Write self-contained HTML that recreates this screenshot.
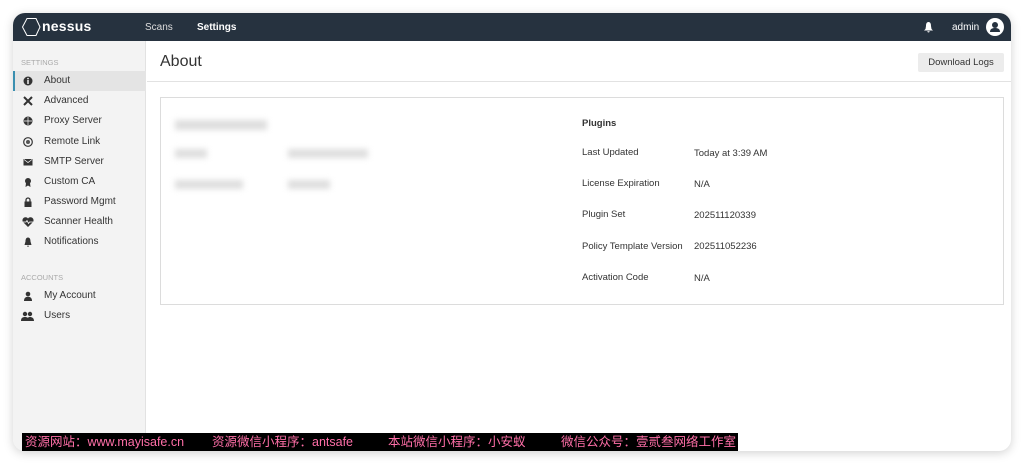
<!DOCTYPE html>
<html><head><meta charset="utf-8"><style>
*{margin:0;padding:0;box-sizing:border-box}
body{width:1024px;height:463px;background:#fff;font-family:"Liberation Sans",sans-serif;position:relative;overflow:hidden}
.win{position:absolute;left:13px;top:13px;width:998px;height:438px;border-radius:12px;overflow:hidden;background:#fff;box-shadow:0 2px 10px rgba(0,0,0,.18)}
.hdr{position:absolute;left:0;top:0;right:0;height:28px;background:#26323f;color:#fff}
.side{position:absolute;left:0;top:28px;width:133px;bottom:0;background:#f3f3f3;border-right:1px solid #e2e2e2}
.sec{font-size:7.5px;color:#aaa;position:absolute;left:8px}
.it{position:absolute;left:0;width:133px;height:20px;font-size:10px;color:#333;line-height:20px;padding-left:31px}
.it .ic{position:absolute;left:10px;top:5px;width:10px;height:10px}
.act{background:#e4e4e4;border-left:2px solid #3a8fb0}
.t{position:absolute;font-size:9.5px;color:#333}
.b{position:absolute;background:#dedede;filter:blur(3px);height:9px}
.bn{position:absolute;top:0;font-size:12.5px;line-height:18px;white-space:nowrap}
</style></head><body>
<div class="win">
 <div class="hdr">
  <svg style="position:absolute;left:8px;top:4px" width="20" height="20" viewBox="0 0 20 20"><polygon points="6,1.5 15,1.5 19,10 15,18.5 6,18.5 1.5,10" fill="none" stroke="#fff" stroke-width="1"/></svg>
  <div style="position:absolute;left:29px;top:5px;font-size:14px;font-weight:bold;letter-spacing:.2px">nessus</div>
  <div style="position:absolute;left:132px;top:9px;font-size:10px;color:#ddd">Scans</div>
  <div style="position:absolute;left:184px;top:9px;font-size:10px;font-weight:bold">Settings</div>
  <svg style="position:absolute;left:910px;top:8px" width="11" height="12" viewBox="0 0 11 12"><path d="M5.5 1C3.5 1 3 3 3 5L2.5 8 1 9.5h9L8.5 8 8 5c0-2-.5-4-2.5-4z M4.3 10.3a1.2 1.2 0 0 0 2.4 0z" fill="#fff"/></svg>
  <div style="position:absolute;left:939px;top:9px;font-size:10px">admin</div>
  <svg style="position:absolute;left:973px;top:5px" width="18" height="18" viewBox="0 0 18 18"><circle cx="9" cy="9" r="9" fill="#fff"/><circle cx="9" cy="7" r="3" fill="#26323f"/><path d="M4 14c0-3 2-4 5-4s5 1 5 4z" fill="#26323f"/></svg>
 </div>
 <div class="side">
  <div class="sec" style="top:17px">SETTINGS</div>
  <div class="it act" style="top:30px;padding-left:29px"><svg class="ic" style="left:8px" viewBox="0 0 10 10"><circle cx="5" cy="5" r="4.5" fill="#333"/><rect x="4.3" y="4" width="1.4" height="4" fill="#fff"/><circle cx="5" cy="2.6" r=".8" fill="#fff"/></svg>About</div>
  <div class="it" style="top:50px"><svg class="ic" viewBox="0 0 10 10"><path d="M1 1l8 8M9 1L1 9" stroke="#333" stroke-width="2"/></svg>Advanced</div>
  <div class="it" style="top:70px"><svg class="ic" viewBox="0 0 10 10"><circle cx="5" cy="5" r="4.5" fill="#333"/><path d="M1 5h8M5 1v8" stroke="#fff" stroke-width=".7"/></svg>Proxy Server</div>
  <div class="it" style="top:91px"><svg class="ic" viewBox="0 0 10 10"><circle cx="5" cy="5" r="4.3" fill="none" stroke="#333" stroke-width="1.2"/><circle cx="5" cy="5" r="2" fill="#555"/></svg>Remote Link</div>
  <div class="it" style="top:111px"><svg class="ic" viewBox="0 0 10 10"><rect x="0.5" y="2" width="9" height="6.5" fill="#333"/><path d="M1 2.5l4 3 4-3" stroke="#fff" stroke-width=".7" fill="none"/></svg>SMTP Server</div>
  <div class="it" style="top:131px"><svg class="ic" viewBox="0 0 10 10"><circle cx="5" cy="4" r="3" fill="#333"/><path d="M3 6l-.5 4 2.5-1.5 2.5 1.5L7 6z" fill="#333"/></svg>Custom CA</div>
  <div class="it" style="top:151px"><svg class="ic" viewBox="0 0 10 10"><path d="M3 4.5V3a2 2 0 0 1 4 0v1.5" stroke="#333" stroke-width="1.3" fill="none"/><rect x="1.5" y="4.5" width="7" height="5.5" fill="#333"/></svg>Password Mgmt</div>
  <div class="it" style="top:171px"><svg class="ic" style="width:12px;left:9px" viewBox="0 0 12 10"><path d="M6 10L1 5a2.8 2.8 0 0 1 5-3.5A2.8 2.8 0 0 1 11 5z" fill="#333"/><path d="M1 5h3l1-1.5 1.5 3 1-1.5h3.5" stroke="#fff" stroke-width=".8" fill="none"/></svg>Scanner Health</div>
  <div class="it" style="top:191px"><svg class="ic" viewBox="0 0 10 10"><path d="M5 .5C3 .5 2.5 2.5 2.5 4.5L1.5 8h7L7.5 4.5C7.5 2.5 7 .5 5 .5zM4 8.7a1 1 0 0 0 2 0z" fill="#333"/></svg>Notifications</div>
  <div class="sec" style="top:232px">ACCOUNTS</div>
  <div class="it" style="top:245px"><svg class="ic" viewBox="0 0 10 10"><circle cx="5" cy="3" r="2.3" fill="#333"/><path d="M1 10c0-3 1.5-4.3 4-4.3S9 7 9 10z" fill="#333"/></svg>My Account</div>
  <div class="it" style="top:265px"><svg class="ic" style="width:13px;left:8px" viewBox="0 0 13 10"><circle cx="4" cy="3" r="2.2" fill="#333"/><circle cx="9" cy="3" r="2.2" fill="#333"/><path d="M0 10c0-3 1.5-4 4-4s4 1 4 4zM6 10c0-3 1-4 3-4s4 1 4 4z" fill="#333"/></svg>Users</div>
 </div>
 <div style="position:absolute;left:134px;top:28px;right:0;height:41px;border-bottom:1px solid #e2e2e2">
  <div style="position:absolute;left:13px;top:12px;font-size:16px;color:#333">About</div>
  <div style="position:absolute;right:7px;top:12px;width:86px;height:19px;background:#ececec;border-radius:2px;font-size:9.5px;color:#333;text-align:center;line-height:19px">Download Logs</div>
 </div>
 <div style="position:absolute;left:147px;top:84px;width:844px;height:208px;border:1px solid #dcdcdc">
  <div class="b" style="left:14px;top:22px;width:92px;height:10px"></div>
  <div class="b" style="left:14px;top:51px;width:32px"></div>
  <div class="b" style="left:127px;top:51px;width:80px"></div>
  <div class="b" style="left:14px;top:82px;width:68px"></div>
  <div class="b" style="left:127px;top:82px;width:42px"></div>
  <div class="t" style="left:421px;top:20px;font-weight:bold">Plugins</div>
  <div class="t" style="left:421px;top:49px">Last Updated</div><div class="t" style="left:533px;top:50px">Today at 3:39 AM</div>
  <div class="t" style="left:421px;top:80px">License Expiration</div><div class="t" style="left:533px;top:81px">N/A</div>
  <div class="t" style="left:421px;top:111px">Plugin Set</div><div class="t" style="left:533px;top:112px">202511120339</div>
  <div class="t" style="left:421px;top:143px">Policy Template Version</div><div class="t" style="left:533px;top:143px">202511052236</div>
  <div class="t" style="left:421px;top:174px">Activation Code</div><div class="t" style="left:533px;top:175px">N/A</div>
 </div>
</div>
<div style="position:absolute;left:22px;top:433px;width:716px;height:18px;background:#000;color:#ff6fa8;font-family:'Liberation Sans','Noto Sans CJK SC',sans-serif">
 <span class="bn" style="left:3px">资源网站：www.mayisafe.cn</span>
 <span class="bn" style="left:190px">资源微信小程序：antsafe</span>
 <span class="bn" style="left:366px">本站微信小程序：小安蚁</span>
 <span class="bn" style="left:539px">微信公众号：壹贰叁网络工作室</span>
</div>
</body></html>
